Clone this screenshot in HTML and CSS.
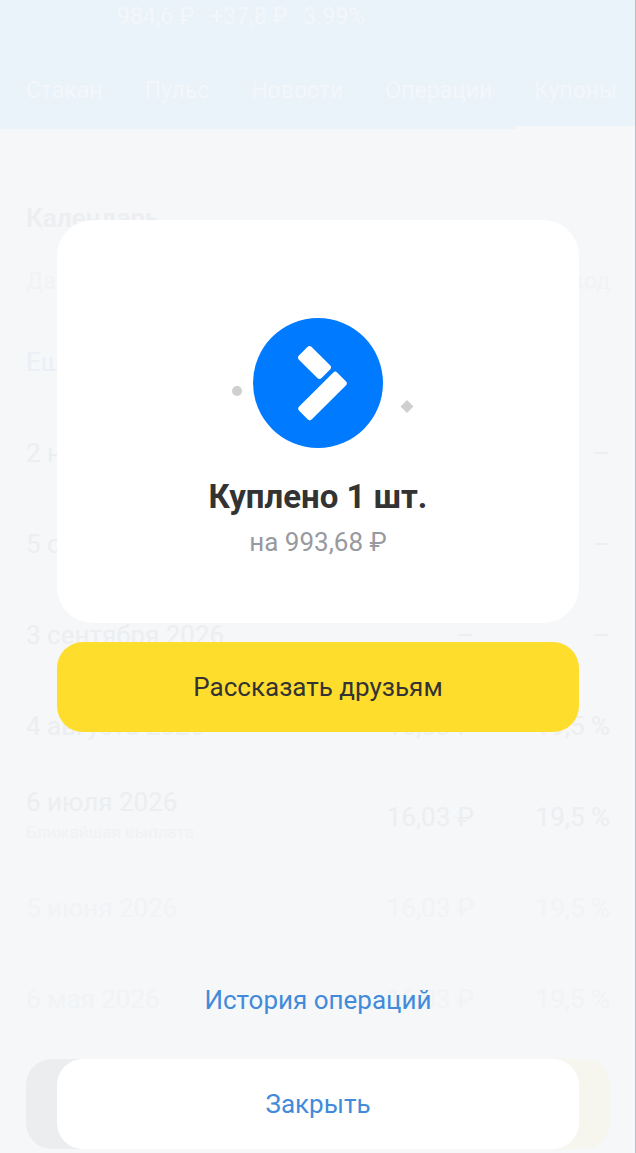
FILE: index.html
```html
<!DOCTYPE html>
<html lang="ru">
<head>
    <meta charset="UTF-8">
    <meta name="viewport" content="width=device-width, initial-scale=1.0">
    <title>Купоны</title>
    <link rel="stylesheet" href="styles.css">
</head>
<body>
    <div class="page">
        <header class="header">
            <div class="price">
                <span>984,6 ₽</span>
                <span>+37,8 ₽</span>
                <span>3.99%</span>
            </div>
            <nav class="tabs">
                <a href="#">Стакан</a>
                <a href="#">Пульс</a>
                <a href="#">Новости</a>
                <a href="#">Операции</a>
                <a href="#" class="active">Купоны</a>
            </nav>
        </header>
        <main class="calendar">
            <h2>Календарь</h2>
            <table class="coupons">
                <thead>
                    <tr><th>Дата</th><th>Купон</th><th>Доход</th></tr>
                </thead>
                <tbody>
                    <tr><td class="more">Ещё</td><td></td><td></td></tr>
                    <tr><td>2 ноября 2026</td><td>–</td><td>–</td></tr>
                    <tr><td>5 октября 2026</td><td>–</td><td>–</td></tr>
                    <tr><td>3 сентября 2026</td><td>–</td><td>–</td></tr>
                    <tr><td>4 августа 2026</td><td>16,03 ₽</td><td>19,5 %</td></tr>
                    <tr><td>6 июля 2026<small>Ближайшая выплата</small></td><td>16,03 ₽</td><td>19,5 %</td></tr>
                    <tr class="past"><td>5 июня 2026</td><td>16,03 ₽</td><td>19,5 %</td></tr>
                    <tr class="past"><td>6 мая 2026</td><td>16,03 ₽</td><td>19,5 %</td></tr>
                </tbody>
            </table>
            <div class="trade">
                <button class="sell" aria-label="Продать"></button>
                <button class="buy" aria-label="Купить"></button>
            </div>
        </main>

        <div class="overlay">
            <section class="card">
                <svg class="picture" width="194" height="130" viewBox="-10 0 194 130">
                    <circle cx="6" cy="73" r="5" fill="#cfcfcf"/>
                    <circle cx="87" cy="65" r="65" fill="#007aff"/>
                    <g fill="#fff">
                        <rect x="-16" y="-9" width="32" height="18" rx="3" transform="translate(83.500 44.500) rotate(45)"/>
                        <rect x="-27" y="-9" width="54" height="18" rx="3" transform="translate(91.500 78) rotate(-45)"/>
                    </g>
                    <path d="M176 82l6.500 6.500-6.500 6.500-6.500-6.500z" fill="#cfcfcf"/>
                </svg>
                <h1>Куплено 1 шт.</h1>
                <p>на 993,68 ₽</p>
            </section>
            <button class="button share">Рассказать друзьям</button>
            <a href="#" class="history">История операций</a>
            <button class="button close">Закрыть</button>
        </div>
    </div>
</body>
</html>
```
FILE: styles.css
```css
* {
    box-sizing: border-box;
}
body {
    margin: 0;
    font-family: Roboto, sans-serif;
    font-size: 26px;
    line-height: 30px;
    background-color: #f5f7f9;
}
button {
    border: none;
    font: inherit;
    cursor: pointer;
}
a {
    text-decoration: none;
}
.page {
    position: relative;
    border-right: 1px solid #b9bdc2;
}

/* faded page under the dialog */
.header {
    background-color: #eaf2fa;
    color: #f3f7fb;
}
.price {
    display: flex;
    gap: 16px;
    padding: 2px 0 0 117px;
    font-size: 23px;
}
.tabs {
    display: flex;
    justify-content: space-between;
    padding: 24px 0 0 8px;
    font-size: 23px;
}
.tabs a {
    padding: 20px 18px;
    color: inherit;
    border-bottom: 3px solid transparent;
}
.tabs .active {
    border-color: #f5f7f9;
}
.calendar {
    padding: 74px 25px 4px 26px;
    color: #eceef0;
}
.calendar h2 {
    margin: 0;
    font-size: 26px;
    font-weight: 500;
}
.coupons {
    width: 100%;
    margin-top: 14px;
    border-collapse: collapse;
}
.coupons th {
    height: 69px;
    padding: 0;
    color: #f1f3f5;
    font-size: 23px;
    font-weight: 400;
    text-align: right;
}
.coupons td {
    height: 91px;
    padding: 0;
    text-align: right;
}
.coupons th:first-child,
.coupons td:first-child {
    text-align: left;
}
.coupons th:last-child,
.coupons td:last-child {
    width: 136px;
}
.coupons .more {
    color: #ebf0f6;
}
.coupons small {
    display: block;
    font-size: 17px;
    color: #f0f2f4;
}
.coupons .past {
    color: #f1f3f5;
}
.trade {
    display: flex;
    gap: 16px;
    margin-top: 15px;
}
.trade button {
    flex: 1;
    height: 90px;
    border-radius: 26px;
}
.sell {
    background-color: #ebedee;
}
.buy {
    background-color: #f6f6ee;
}

.overlay {
    position: absolute;
    inset: 0;
    display: flex;
    flex-direction: column;
    padding: 220px 56px 4px 57px;
    text-align: center;
}
.card {
    padding: 98px 24px 66px;
    border-radius: 36px;
    background-color: #fff;
}
.picture {
    display: block;
    margin: 0 auto;
}
.card h1 {
    margin: 29px 0 0;
    color: #333;
    font-size: 33px;
    line-height: 40px;
}
.card p {
    margin: 10px 0 0;
    color: #979a9e;
}
.button {
    height: 90px;
    border-radius: 26px;
}
.share {
    margin-top: 19px;
    background-color: #ffdd2d;
    color: #333;
}
.history {
    margin: auto auto 44px;
    color: #428bda;
}
.close {
    background-color: #fff;
    color: #428bda;
}
```
